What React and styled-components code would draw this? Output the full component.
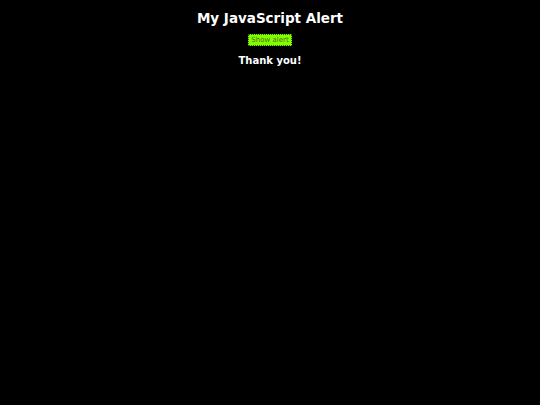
import React, { useState } from "react";
import styled, { createGlobalStyle } from "styled-components";

const GlobalStyle = createGlobalStyle`
  html, body {
    margin: 0;
    padding: 0;
    background: #000;
    height: 100%;
  }
  body {
    font-family: "DejaVu Sans", Verdana, sans-serif;
    color: #fff;
  }
`;

const Page = styled.div`
  display: flex;
  flex-direction: column;
  align-items: center;
  padding-top: 10px;
`;

const Title = styled.h1`
  margin: 0;
  font-size: 13.5px;
  font-weight: 700;
  line-height: 17px;
`;

const AlertButton = styled.button`
  margin-top: 7px;
  height: 12px;
  padding: 0 2px;
  background: #7fff00;
  border: 1px dotted #2a5a00;
  color: #5a6a10;
  font-family: "DejaVu Sans", Verdana, sans-serif;
  font-size: 7px;
  line-height: 10px;
  cursor: pointer;
`;

const Thanks = styled.h2`
  margin: 9px 0 0;
  font-size: 10px;
  font-weight: 700;
  line-height: 12px;
`;

export default function App() {
  const [clicked, setClicked] = useState(0);
  return (
    <>
      <GlobalStyle />
      <Page>
        <Title>My JavaScript Alert</Title>
        <AlertButton onClick={() => setClicked(clicked + 1)}>Show alert</AlertButton>
        <Thanks>Thank you!</Thanks>
      </Page>
    </>
  );
}
